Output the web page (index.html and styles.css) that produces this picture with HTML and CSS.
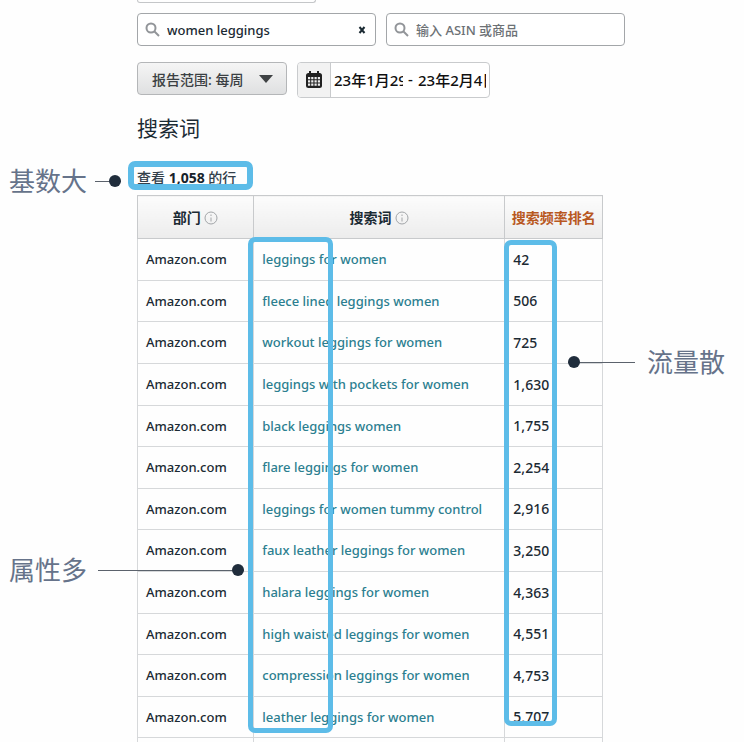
FILE: index.html
```html
<!DOCTYPE html>
<html lang="zh-CN">
<head>
    <meta charset="UTF-8">
    <title>搜索词</title>
    <link rel="stylesheet" href="styles.css">
</head>
<body>
<div class="report">
    <div class="tab-edge"></div>
    <form class="filters">
        <div class="search">
            <svg class="icon-search" viewBox="0 0 16 16"><circle cx="6" cy="6" r="4.5"/><path d="M9.5 9.5L14 14"/></svg>
            <input type="text" value="women leggings" aria-label="搜索词">
            <button type="button" class="clear" aria-label="清除">
                <svg viewBox="0 0 8 8"><path d="M1.5 1L6.5 7M6.5 1L1.5 7"/></svg>
            </button>
        </div>
        <div class="search">
            <svg class="icon-search" viewBox="0 0 16 16"><circle cx="6" cy="6" r="4.5"/><path d="M9.5 9.5L14 14"/></svg>
            <input type="text" placeholder="输入 ASIN 或商品" aria-label="ASIN 或商品">
        </div>
    </form>
    <div class="range">
        <button type="button" class="period">报告范围: 每周
            <svg viewBox="0 0 14 8"><path d="M0 0H14L7 8Z"/></svg>
        </button>
        <div class="dates">
            <span class="calendar">
                <svg viewBox="0 0 18 18">
                    <rect x="1" y="2" width="16" height="15" rx="2.5"/>
                    <path class="rings" d="M5 0V4M13 0V4"/>
                    <path class="cells" d="M3 6h2.2v2.2h-2.2zM6.2 6h2.2v2.2h-2.2zM9.5 6h2.2v2.2h-2.2zM12.8 6h2.2v2.2h-2.2zM3 9.3h2.2v2.2h-2.2zM6.2 9.3h2.2v2.2h-2.2zM9.5 9.3h2.2v2.2h-2.2zM12.8 9.3h2.2v2.2h-2.2zM3 12.6h2.2v2.2h-2.2zM6.2 12.6h2.2v2.2h-2.2zM9.5 12.6h2.2v2.2h-2.2zM12.8 12.6h2.2v2.2h-2.2z"/>
                </svg>
            </span>
            <input type="text" class="from" value="23年1月29日" aria-label="开始日期">
            <span class="dash">-</span>
            <input type="text" class="to" value="23年2月4日" aria-label="结束日期">
        </div>
    </div>
    <h1>搜索词</h1>
    <p class="count">查看 <b>1,058</b> 的行
        <span class="mark mark-count"></span>
        <span class="note note-count">基数大<i></i></span>
    </p>
    <div class="result">
        <table>
            <thead>
            <tr>
                <th class="dept">部门 <svg class="info" viewBox="0 0 14 14"><circle cx="7" cy="7" r="6"/><path d="M7 6.5V10.5M7 3.5V5"/></svg></th>
                <th class="term">搜索词 <svg class="info" viewBox="0 0 14 14"><circle cx="7" cy="7" r="6"/><path d="M7 6.5V10.5M7 3.5V5"/></svg></th>
                <th class="rank">搜索频率排名</th>
            </tr>
            </thead>
            <tbody>
            <tr><td>Amazon.com</td><td><a href="#">leggings for women</a></td><td>42</td></tr>
            <tr><td>Amazon.com</td><td><a href="#">fleece lined leggings women</a></td><td>506</td></tr>
            <tr><td>Amazon.com</td><td><a href="#">workout leggings for women</a></td><td>725</td></tr>
            <tr><td>Amazon.com</td><td><a href="#">leggings with pockets for women</a></td><td>1,630</td></tr>
            <tr><td>Amazon.com</td><td><a href="#">black leggings women</a></td><td>1,755</td></tr>
            <tr><td>Amazon.com</td><td><a href="#">flare leggings for women</a></td><td>2,254</td></tr>
            <tr><td>Amazon.com</td><td><a href="#">leggings for women tummy control</a></td><td>2,916</td></tr>
            <tr><td>Amazon.com</td><td><a href="#">faux leather leggings for women</a></td><td>3,250</td></tr>
            <tr><td>Amazon.com</td><td><a href="#">halara leggings for women</a></td><td>4,363</td></tr>
            <tr><td>Amazon.com</td><td><a href="#">high waisted leggings for women</a></td><td>4,551</td></tr>
            <tr><td>Amazon.com</td><td><a href="#">compression leggings for women</a></td><td>4,753</td></tr>
            <tr><td>Amazon.com</td><td><a href="#">leather leggings for women</a></td><td>5,707</td></tr>
            </tbody>
            <tfoot>
            <tr><td></td><td></td><td></td></tr>
            </tfoot>
        </table>
        <div class="mark mark-term"></div>
        <div class="mark mark-rank"></div>
        <div class="note note-term">属性多<i></i></div>
        <div class="note note-rank"><i></i>流量散</div>
    </div>
</div>
</body>
</html>
```
FILE: styles.css
```css
*{
    margin: 0;
    padding: 0;
    box-sizing: border-box;
}
body{
    background: #fefefe;
    color: #1b2a33;
    font-family: "Noto Sans", "Noto Sans CJK SC", sans-serif;
    font-size: 13px;
    font-weight: 500;
}
input,button{
    font: inherit;
    color: inherit;
    border: 0;
    background: none;
    outline: none;
}
svg{
    fill: none;
    stroke: currentColor;
}
.report{
    padding: 0 119px 0 137px;
}
.tab-edge{
    width: 179px;
    height: 3px;
    border: 1px solid #c4c6c8;
    border-top: 0;
    border-radius: 0 0 3px 3px;
}
/* filters */
.filters{
    display: flex;
    gap: 10px;
    margin-top: 10px;
}
.search{
    flex: 1;
    display: flex;
    align-items: center;
    height: 33px;
    padding: 0 9px 0 7px;
    border: 1px solid #a3a6a9;
    border-radius: 4px;
    background: #fff;
}
.search input{
    flex: 1;
    min-width: 0;
    margin-left: 6px;
}
.search input::placeholder{
    color: #6c7175;
    opacity: 1;
}
.icon-search{
    width: 16px;
    height: 16px;
    color: #929599;
    stroke-width: 2;
}
.clear{
    display: flex;
}
.clear svg{
    width: 8px;
    height: 8px;
    stroke-width: 2;
}
.range{
    display: flex;
    align-items: flex-start;
    gap: 10px;
    margin-top: 16px;
}
.period{
    display: flex;
    align-items: center;
    justify-content: space-between;
    width: 150px;
    height: 33px;
    padding: 0 13px 0 14px;
    border: 1px solid #b4b6b8;
    border-radius: 4px;
    background: linear-gradient(#f5f5f5, #dfe0e1);
    color: #3b4043;
    font-size: 14px;
}
.period svg{
    width: 14px;
    height: 8px;
    fill: #3f4244;
    stroke: none;
}
.dates{
    display: flex;
    align-items: center;
    height: 36px;
    width: 193px;
    padding-bottom: 2px;
    border: 1px solid #c9cbcd;
    border-radius: 4px;
    background: #fff;
    color: #101010;
    font-size: 15px;
    overflow: hidden;
}
.dates input{
    min-width: 0;
}
.dates .from{
    width: 69px;
}
.dates .to{
    width: 68px;
}
.dash{
    width: 15px;
    text-align: center;
}
.calendar{
    display: flex;
    flex: none;
    align-self: flex-start;
    align-items: center;
    justify-content: center;
    width: 33px;
    height: 34px;
    margin-right: 3px;
    border-right: 1px solid #c9cbcd;
    background: #f2f2f2;
}
.calendar svg{
    width: 18px;
    height: 18px;
    fill: #222;
    stroke: none;
}
.calendar .rings{
    stroke: #222;
    stroke-width: 2;
}
.calendar .cells{
    fill: #eee;
}
/* title and row count */
h1{
    margin-top: 15px;
    font-size: 21px;
    font-weight: 400;
    line-height: 30px;
}
.count{
    position: relative;
    margin-top: 25px;
    font-size: 14px;
    line-height: 20px;
    color: #33404a;
}
.count b{
    color: #16222a;
}
/* table */
.result{
    position: relative;
    margin: 7px 22px 0 0;
}
table{
    width: 100%;
    table-layout: fixed;
    border-collapse: collapse;
}
th,td{
    border: 1px solid #d6d8da;
}
th{
    height: 43px;
    background: linear-gradient(#fcfcfc, #ececec);
    border-color: #c8cacc;
    font-size: 14px;
    font-weight: 700;
    white-space: nowrap;
}
td{
    height: 42px;
    padding: 0 8px 1px;
    white-space: nowrap;
}
tr:nth-child(5n+2) td,tr:nth-child(5n) td{
    height: 41px;
}
td:last-child{
    font-size: 14px;
}
tfoot tr td{
    height: 4px;
    padding: 0;
    border-bottom: 0;
}
.dept{
    width: 25%;
}
.term{
    width: 54%;
}
.rank{
    color: #b8581f;
}
.info{
    width: 14px;
    height: 14px;
    color: #a2a5a8;
    vertical-align: -2px;
}
td a{
    color: #2c7f90;
    text-decoration: none;
}
/* highlight frames */
.mark{
    position: absolute;
    border: 5px solid #5dbce8;
    border-radius: 7px;
}
.mark-count{
    left: -9px;
    top: -7px;
    width: 125px;
    height: 29px;
    border-width: 6px;
}
.mark-term{
    left: 111px;
    top: 42px;
    bottom: 9px;
    width: 85px;
}
.mark-rank{
    left: 367px;
    top: 45px;
    bottom: 16px;
    width: 53px;
}
/* notes beside the frames */
.note{
    position: absolute;
    display: flex;
    align-items: center;
    color: #66738a;
    font-size: 26px;
    font-weight: 400;
    line-height: 36px;
    white-space: nowrap;
}
.note i{
    position: relative;
    height: 1px;
    background: #5b626c;
}
.note i::after{
    content: "";
    position: absolute;
    top: -6px;
    right: 0;
    width: 12px;
    height: 12px;
    border-radius: 50%;
    background: #202d3c;
}
.note-count{
    left: -128px;
    top: -5px;
}
.note-count i{
    width: 26px;
    margin-left: 8px;
}
.note-term{
    left: -128px;
    top: 357px;
}
.note-term i{
    width: 146px;
    margin-left: 11px;
}
.note-rank{
    left: 431px;
    top: 149px;
}
.note-rank i{
    width: 67px;
    margin-right: 12px;
}
.note-rank i::after{
    right: auto;
    left: 0;
}
```
